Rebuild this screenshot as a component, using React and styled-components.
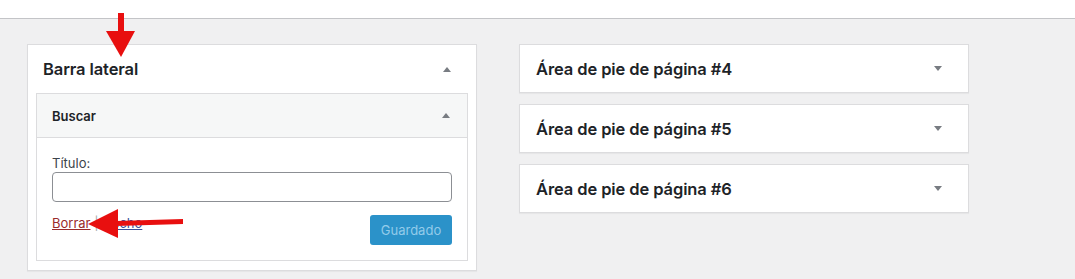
import React from "react"
import styled, { createGlobalStyle } from "styled-components"

const GlobalStyle = createGlobalStyle`
  html, body {
    margin: 0;
    padding: 0;
    background: #f0f0f1;
    font-family: Inter, "Open Sans", "Liberation Sans", sans-serif;
    color: #1d2327;
  }
`

const Page = styled.div`
  position: relative;
  width: 1075px;
  height: 279px;
  overflow: hidden;
`

const TopBar = styled.div`
  height: 18px;
  background: #fff;
  border-bottom: 1px solid #c3c4c7;
`

const Columns = styled.div`
  display: flex;
  align-items: flex-start;
  gap: 42px;
  padding: 25px 0 0 27px;
`

const Column = styled.div`
  width: 450px;
  display: flex;
  flex-direction: column;
  gap: 11px;
`

const Area = styled.div`
  background: #fff;
  border: 1px solid #dcdcde;
  box-shadow: 0 1px 1px rgba(0, 0, 0, 0.04);
  padding: ${(p) => (p.$open ? "0 8px 9px" : "0")};
`

const AreaHeader = styled.div`
  height: ${(p) => (p.$open ? "48px" : "47px")};
  display: flex;
  align-items: center;
  justify-content: space-between;
  padding: ${(p) => (p.$open ? "0 17px 0 7px" : "0 26px 0 16px")};
  h2 {
    margin: 0;
    font-size: 16.5px;
    font-weight: 600;
    letter-spacing: -0.1px;
    color: #1d2327;
  }
`

const Caret = styled.span`
  width: 0;
  height: 0;
  border-left: 4px solid transparent;
  border-right: 4px solid transparent;
  ${(p) =>
    p.$up
      ? "border-bottom: 5px solid #787c82;"
      : "border-top: 5px solid #787c82;"}
`

const Widget = styled.div`
  border: 1px solid #dcdcde;
  background: #fff;
`

const WidgetTop = styled.div`
  height: 43px;
  background: #f6f7f7;
  border-bottom: 1px solid #dcdcde;
  display: flex;
  align-items: center;
  justify-content: space-between;
  padding: 0 17px 0 15px;
  h3 {
    margin: 0;
    font-size: 13px;
    font-weight: 600;
    color: #1d2327;
  }
`

const WidgetBody = styled.div`
  padding: 17px 15px 15px;
`

const Label = styled.label`
  display: block;
  font-size: 13px;
  color: #3c434a;
  line-height: 16px;
  margin-bottom: 1px;
`

const Input = styled.input`
  display: block;
  box-sizing: border-box;
  width: 100%;
  height: 30px;
  border: 1px solid #8c8f94;
  border-radius: 4px;
  background: #fff;
`

const Actions = styled.div`
  display: flex;
  justify-content: space-between;
  align-items: flex-start;
  margin-top: 13px;
`

const Links = styled.div`
  font-size: 13px;
  line-height: 16px;
  color: #a7aaad;
  a {
    color: #9a2b2b;
    text-decoration: underline;
  }
  a + a {
    color: #3c4f9a;
  }
`

const Button = styled.button`
  height: 30px;
  width: 82px;
  border: none;
  border-radius: 3px;
  background: #2b92c9;
  color: #93cbea;
  font-family: inherit;
  font-size: 13px;
  padding: 0;
`

const Annotations = styled.svg`
  position: absolute;
  left: 0;
  top: 0;
  pointer-events: none;
`

export default function App() {
  const footers = ["#4", "#5", "#6"]
  return (
    <Page>
      <GlobalStyle />
      <TopBar />
      <Columns>
        <Column>
          <Area $open>
            <AreaHeader $open>
              <h2>Barra lateral</h2>
              <Caret $up />
            </AreaHeader>
            <Widget>
              <WidgetTop>
                <h3>Buscar</h3>
                <Caret $up />
              </WidgetTop>
              <WidgetBody>
                <Label>Título:</Label>
                <Input type="text" />
                <Actions>
                  <Links>
                    <a>Borrar</a> | <a>Hecho</a>
                  </Links>
                  <Button>Guardado</Button>
                </Actions>
              </WidgetBody>
            </Widget>
          </Area>
        </Column>
        <Column>
          {footers.map((n) => (
            <Area key={n}>
              <AreaHeader>
                <h2>Área de pie de página {n}</h2>
                <Caret />
              </AreaHeader>
            </Area>
          ))}
        </Column>
      </Columns>
      <Annotations width="1075" height="279">
        <rect x="118" y="13" width="6" height="19" fill="#e80f0f" />
        <polygon points="106,31 135,31 121,57" fill="#e80f0f" />
        <polygon points="116,221 183,219 183,224 116,226" fill="#e80f0f" />
        <polygon points="118,209 118,238 88,224" fill="#e80f0f" />
      </Annotations>
    </Page>
  )
}
